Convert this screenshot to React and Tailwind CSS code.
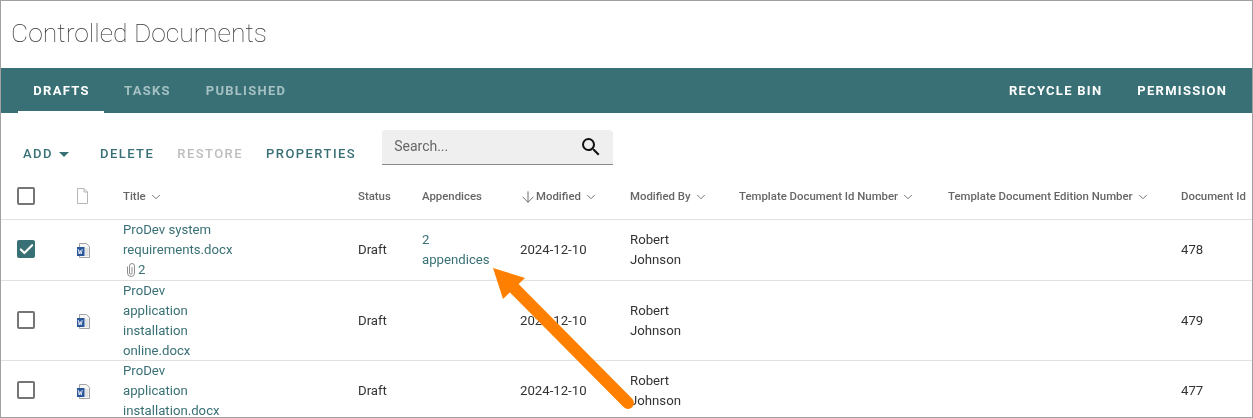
import React from 'react';
import { Check, ChevronDown, ArrowDown } from 'lucide-react';
import { MdSearch } from 'react-icons/md';

const cols = 'grid grid-cols-[74px_48px_235px_64px_98px_110px_109px_209px_233px_1fr] items-center will-change-transform';

const WordIcon = () => (
  <svg width="14" height="16" viewBox="0 0 14 16" className="mt-[2px] block">
    <path d="M2.500 .5h7l3 3v11h-10z" fill="#f6f6f6" stroke="#a3a3a3" />
    <path d="M8 6h3.500M8 8h3.500M8 10h3.500M8 12h3.500" stroke="#cfcfcf" />
    <rect x="0" y="4" width="7.500" height="9" fill="#2b579a" />
    <path d="M1.200 6l1 5 1-3.500 1 3.500 1-5" fill="none" stroke="#fff" strokeWidth=".8" />
  </svg>
);

const BlankIcon = () => (
  <svg width="13" height="16" viewBox="0 0 13 16" className="block">
    <path d="M1.500 .5h6.500l3.500 3.500v11.500h-10z M8 .5v3.500h3.500" fill="none" stroke="#b5b5b5" />
  </svg>
);

const ClipIcon = () => (
  <svg width="8" height="14" viewBox="0 0 8 14" className="block">
    <path d="M.5 3.500v6.500a3.500 3.500 0 0 0 7 0v-7a2.500 2.500 0 0 0-5 0v7a1 1 0 0 0 2.500 0v-6" fill="none" stroke="#808080" strokeWidth=".9" />
  </svg>
);

const HeaderCell = ({ children, chevron = true }) => (
  <div className="mt-[2px] flex items-center text-[11.4px] font-medium text-[#666666]">
    {children}
    {chevron && <ChevronDown size={14} strokeWidth={1.5} className="ml-[3px]" />}
  </div>
);

const Row = ({ title, checked, height, id, appendices, attachments }) => (
  <div className={`${cols} border-b border-[#e1e1e1] text-[13.2px] leading-[20px] text-[#333333] ${height}`}>
    <div className="-mt-[2px] pl-[16px]">
      {checked ? (
        <div className="flex h-[18px] w-[18px] items-center justify-center rounded-[2px] bg-[#397075]">
          <Check size={17} strokeWidth={3} className="text-white" />
        </div>
      ) : (
        <div className="h-[18px] w-[18px] rounded-[2px] border-2 border-[#757575]" />
      )}
    </div>
    <div className="pl-[2px]"><WordIcon /></div>
    <div className="w-[115px] text-[#397075]">
      {title.map((t) => <div key={t}>{t}</div>)}
      {attachments && (
        <div className="flex items-center pl-[4px]">
          <ClipIcon />
          <span className="ml-[3px]">{attachments}</span>
        </div>
      )}
    </div>
    <div>Draft</div>
    <div className="text-[#397075]">
      {appendices && (<><div>2</div><div>{appendices}</div></>)}
    </div>
    <div>2024-12-10</div>
    <div><div>Robert</div><div>Johnson</div></div>
    <div />
    <div />
    <div>{id}</div>
  </div>
);

export default function App() {
  return (
    <div className="relative h-[418px] w-[1253px] overflow-hidden border border-[#a0a0a0] bg-white font-['Roboto',sans-serif]">
      <div className="h-[67px] pl-[10px] pt-[14px]">
        <h1 className="text-[26.5px] font-thin leading-[36px] text-[#333333] will-change-transform">Controlled Documents</h1>
      </div>
      <div className="flex h-[45px] items-stretch justify-between bg-[#397075] text-[13px] font-bold tracking-[1.27px]">
        <div className="flex pl-[17px] will-change-transform">
          <div className="flex w-[86px] items-center justify-center border-b-2 border-white pl-[1px] pt-[3px] text-white">DRAFTS</div>
          <div className="ml-[20px] flex items-center pt-[1px] text-[#a5c1c3]">TASKS</div>
          <div className="ml-[35px] flex items-center pt-[1px] text-[#a5c1c3]">PUBLISHED</div>
        </div>
        <div className="flex items-center gap-[35px] pr-[25px] pt-[1px] text-white will-change-transform">
          <span>RECYCLE BIN</span>
          <span>PERMISSION</span>
        </div>
      </div>
      <div className="flex h-[54px] items-start pl-[22px] text-[13px] font-medium tracking-[1.45px] text-[#397075] will-change-transform">
        <div className="mt-[33px] flex items-center leading-[16px]">
          <span>ADD</span>
          <svg width="10" height="5" viewBox="0 0 10 5" className="ml-[6px]"><path d="M0 0h10L5 5z" fill="#397075" /></svg>
          <span className="ml-[31px]">DELETE</span>
          <span className="ml-[23px] text-[#bdbdbd]">RESTORE</span>
          <span className="ml-[23px]">PROPERTIES</span>
        </div>
        <div className="ml-[26px] mt-[17px] flex h-[35px] w-[231px] items-center justify-between rounded-t-[4px] border-b border-[#8a8a8a] bg-[#efefef] pb-[2px] pl-[12px] pr-[10px] text-[14px] font-normal tracking-normal text-[#666666]">
          <span>Search...</span>
          <MdSearch size={24} className="mt-[2px] text-[#111111]" />
        </div>
      </div>
      <div className={`${cols} h-[53px] border-b border-[#e1e1e1] pt-[6px]`}>
        <div className="pl-[16px]"><div className="h-[18px] w-[18px] rounded-[2px] border-2 border-[#757575]" /></div>
        <div className="pl-[1px]"><BlankIcon /></div>
        <HeaderCell>Title</HeaderCell>
        <HeaderCell chevron={false}>Status</HeaderCell>
        <HeaderCell chevron={false}>Appendices</HeaderCell>
        <HeaderCell><ArrowDown size={18} strokeWidth={1.25} className="-mx-[1px]" />Modified</HeaderCell>
        <HeaderCell>Modified By</HeaderCell>
        <HeaderCell>Template Document Id Number</HeaderCell>
        <HeaderCell>Template Document Edition Number</HeaderCell>
        <HeaderCell chevron={false}>Document Id</HeaderCell>
      </div>
      <Row checked title={['ProDev system', 'requirements.docx']} attachments="2" appendices="appendices" id="478" height="h-[61px]" />
      <Row title={['ProDev', 'application', 'installation', 'online.docx']} id="479" height="h-[80px]" />
      <Row title={['ProDev', 'application', 'installation.docx']} id="477" height="h-[60px]" />
      <svg className="pointer-events-none absolute left-[-1px] top-[-1px]" width="1253" height="418" viewBox="0 0 1253 418">
        <path d="M628 403L512 286" stroke="#ff8000" strokeWidth="12" strokeLinecap="round" fill="none" />
        <path d="M493 268L525 278L503 299z" fill="#ff8000" />
      </svg>
    </div>
  );
}
